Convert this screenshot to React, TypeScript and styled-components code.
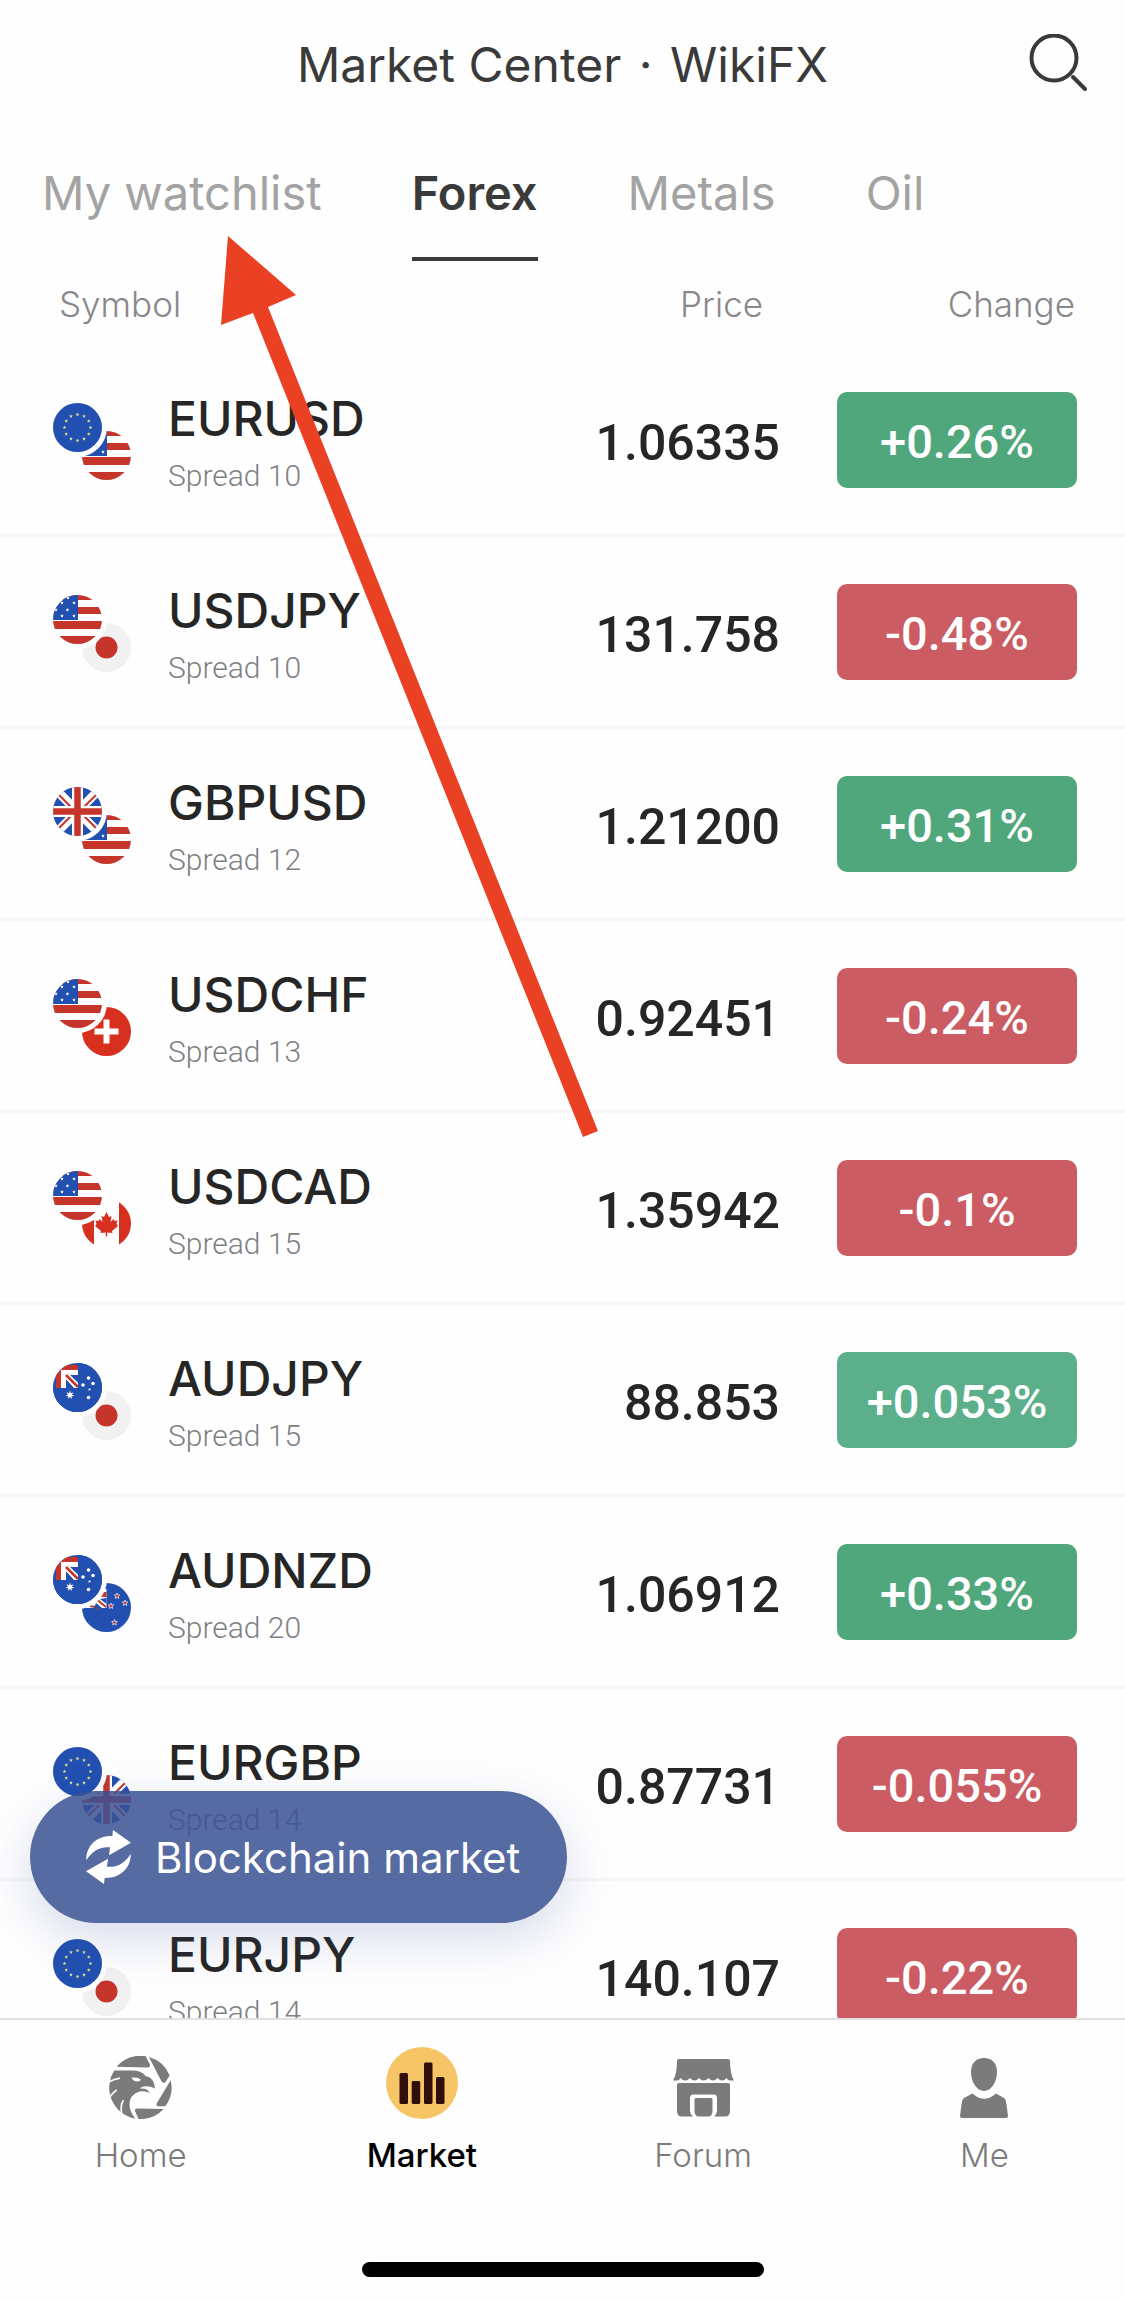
import React, { useId, useState } from 'react';
import styled, { createGlobalStyle } from 'styled-components';

type Country = 'eu' | 'us' | 'jp' | 'gb' | 'ch' | 'ca' | 'au' | 'nz';

interface Quote {
  symbol: string;
  base: Country;
  quote: Country;
  spread: number;
  price: string;
  change: string;
  soft?: boolean;
}

const quotes: Quote[] = [
  { symbol: 'EURUSD', base: 'eu', quote: 'us', spread: 10, price: '1.06335', change: '+0.26%' },
  { symbol: 'USDJPY', base: 'us', quote: 'jp', spread: 10, price: '131.758', change: '-0.48%' },
  { symbol: 'GBPUSD', base: 'gb', quote: 'us', spread: 12, price: '1.21200', change: '+0.31%' },
  { symbol: 'USDCHF', base: 'us', quote: 'ch', spread: 13, price: '0.92451', change: '-0.24%' },
  { symbol: 'USDCAD', base: 'us', quote: 'ca', spread: 15, price: '1.35942', change: '-0.1%' },
  { symbol: 'AUDJPY', base: 'au', quote: 'jp', spread: 15, price: '88.853', change: '+0.053%', soft: true },
  { symbol: 'AUDNZD', base: 'au', quote: 'nz', spread: 20, price: '1.06912', change: '+0.33%' },
  { symbol: 'EURGBP', base: 'eu', quote: 'gb', spread: 14, price: '0.87731', change: '-0.055%' },
  { symbol: 'EURJPY', base: 'eu', quote: 'jp', spread: 14, price: '140.107', change: '-0.22%' },
];

const tabs = ['My watchlist', 'Forex', 'Metals', 'Oil'];

const BLUE = '#2250b0';
const RED = '#c6352c';

const star = (cx: number, cy: number, r: number, points = 5) =>
  Array.from({ length: points * 2 }, (_, i) => {
    const a = (Math.PI * i) / points - Math.PI / 2;
    const d = i % 2 ? r * 0.45 : r;
    return `${(cx + d * Math.cos(a)).toFixed(2)},${(cy + d * Math.sin(a)).toFixed(2)}`;
  }).join(' ');

const UnionJack: React.FC = () => (
  <>
    <rect width="49" height="49" fill={BLUE} />
    <path d="M0 0L49 49M49 0L0 49" stroke="#fff" strokeWidth="9" />
    <path d="M5 7L20 22M44 7L29 22M5 42L20 27M44 42L29 27" stroke={RED} strokeWidth="2" />
    <path d="M24.5 0V49M0 24.5H49" stroke="#fff" strokeWidth="11" />
    <path d="M24.5 0V49M0 24.5H49" stroke={RED} strokeWidth="6.5" />
  </>
);

const flags: Record<Country, React.ReactNode> = {
  eu: (
    <>
      <rect width="49" height="49" fill={BLUE} />
      {Array.from({ length: 12 }, (_, i) => {
        const a = (Math.PI * i) / 6;
        return (
          <polygon
            key={i}
            points={star(24.5 + 13 * Math.sin(a), 24.5 - 13 * Math.cos(a), 2)}
            fill="#d6dc8c"
          />
        );
      })}
    </>
  ),
  us: (
    <>
      <rect width="49" height="49" fill="#fff" />
      <path d="M0 0H49V5H0ZM0 12H49V19H0ZM0 26H49V34H0ZM0 41H49V49H0Z" fill={RED} />
      <rect width="25" height="25" fill={BLUE} />
      {[[9, 8], [21, 8], [3, 15], [14.5, 15], [9, 21], [21, 21], [15, 3]].map(([x, y]) => (
        <polygon key={`${x}-${y}`} points={star(x, y, 1.9)} fill="#fff" />
      ))}
    </>
  ),
  jp: (
    <>
      <rect width="49" height="49" fill="#f1f1f1" />
      <circle cx="24.5" cy="24.5" r="11" fill={RED} />
    </>
  ),
  gb: <UnionJack />,
  ch: (
    <>
      <rect width="49" height="49" fill="#d8301f" />
      <path d="M21.5 12.5h6v9h9v6h-9v9h-6v-9h-9v-6h9z" fill="#fff" />
    </>
  ),
  ca: (
    <>
      <rect width="49" height="49" fill="#fefefe" />
      <path d="M0 0H12V49H0ZM37 0H49V49H37Z" fill="#d8301f" />
      <path
        d="M24.5 13L27 18L29.5 17L28.5 23L31.5 20L32.5 22L35.5 21.5L34.5 25L36 27L30 32L30.5 34L25.2 33.5V37.5H23.8V33.5L18.5 34L19 32L13 27L14.5 25L13.5 21.5L16.5 22L17.5 20L20.5 23L19.5 17L22 18Z"
        fill="#d8301f"
      />
    </>
  ),
  au: (
    <>
      <rect width="49" height="49" fill={BLUE} />
      <path d="M3 2H25V25H3Z" fill={RED} />
      <path d="M9 25V8H25" stroke="#fff" strokeWidth="2" fill="none" />
      <path d="M10 9H25V25H10Z" fill="#fff" />
      <path d="M16 12H25V20ZM13 16V25H21Z" fill={BLUE} />
      <path d="M12 11L26 25" stroke="#fff" strokeWidth="6" />
      <path d="M13 12L25 24" stroke={RED} strokeWidth="2.5" />
      <path d="M25 0H49V49H0V25H25Z" fill={BLUE} />
      <polygon points={star(17, 32, 4.5, 7)} fill="#fff" />
      {[[35.5, 15], [30, 22], [40, 20.5], [36.5, 26.5], [35.5, 34.5]].map(([x, y]) => (
        <circle key={`${x}-${y}`} cx={x} cy={y} r={x === 36.5 ? 1.1 : 1.8} fill="#fff" />
      ))}
    </>
  ),
  nz: (
    <>
      <rect width="49" height="49" fill={BLUE} />
      <path d="M4 6H24.5V25H4Z" fill="#fff" />
      <path d="M17 9H24.5V14H17Z" fill={RED} />
      <path d="M13 15L24 24M8 23L18 25" stroke={RED} strokeWidth="2" />
      <path d="M18 16L24.5 15V21ZM14 20L20 25H12Z" fill={BLUE} />
      {[[35, 13], [43, 20], [29, 23], [32.5, 39.5]].map(([x, y]) => (
        <polygon
          key={`${x}-${y}`}
          points={star(x, y, 3)}
          fill={RED}
          stroke="#dfe4f5"
          strokeWidth="0.8"
        />
      ))}
    </>
  ),
};

const FlagPair: React.FC<{ base: Country; quote: Country }> = ({ base, quote }) => {
  const clip = useId();
  return (
    <FlagArt viewBox="0 0 78 78" aria-hidden="true">
      <clipPath id={clip}>
        <circle cx="24.5" cy="24.5" r="24.5" />
      </clipPath>
      <g transform="translate(29 28)">
        <g clipPath={`url(#${clip})`}>{flags[quote]}</g>
      </g>
      <circle cx="24.5" cy="24.5" r="29.5" fill="#fefefe" />
      <g clipPath={`url(#${clip})`}>{flags[base]}</g>
    </FlagArt>
  );
};

const SearchIcon: React.FC = () => (
  <svg width="60" height="60" viewBox="0 0 60 60" fill="none" stroke="#3a3a3a" strokeWidth="4">
    <circle cx="25" cy="24" r="22.5" />
    <path d="M44 43L56 55" strokeLinecap="round" />
  </svg>
);

const EagleIcon: React.FC = () => (
  <svg width="63" height="63" viewBox="27 20 188 188" fill="#7b7b7b">
    <path d="M50 52A94 94 0 0 1 136 20L149 45Q151 54 143 54Z" />
    <path d="M146 23A94 94 0 0 1 208 78L195 98Q189 103 184 96Z" />
    <path d="M211 92A94 94 0 0 1 195 170H174Q166 169 170 160Z" />
    <path d="M190 178A94 94 0 0 1 115 208L105 185Q103 177 110 177Z" />
    <path d="M43 63H92Q126 62 136 80Q162 84 164 118Q156 110 138 110Q122 111 119 117Q141 115 149 130Q130 122 112 128Q88 138 88 164Q88 184 105 207A94 94 0 0 1 43 63Z" />
    <path d="M94 84L112 85L122 90Q121 97 110 96Q99 95 94 84Z" fill="#fff" />
    <path
      d="M26 98Q40 89 60 86M26 146Q36 132 50 121M65 192Q60 166 70 152"
      stroke="#fff"
      strokeWidth="5"
      fill="none"
    />
  </svg>
);

const MarketIcon: React.FC = () => (
  <svg width="72" height="72" viewBox="0 0 72 72">
    <circle cx="36" cy="36" r="36" fill="#f5c566" />
    <g fill="#2f0e0b">
      <rect x="13.5" y="26" width="8.5" height="31" rx="1.5" />
      <rect x="25.7" y="34" width="8.5" height="23" rx="1.5" />
      <rect x="38" y="15.5" width="8.5" height="41.5" rx="1.5" />
      <rect x="50" y="30" width="8.5" height="27" rx="1.5" />
    </g>
  </svg>
);

const ForumIcon: React.FC = () => (
  <svg width="61" height="60" viewBox="0 0 61 60" fill="#7b7b7b">
    <path d="M6 0H55Q57 0 57 2Q57 15 61 21.5H57Q55 21.5 53.5 19Q49.5 24 44.5 19Q40 24 35.5 19Q30.5 24 26 19Q21.5 24 17 19Q12 24 7.5 19Q6 21.5 4 21.5H0Q4 15 4 2Q4 0 6 0Z" />
    <path d="M6 24H55Q57 24 57 26V52Q57 57.5 52 57.5H41Q44 55 44 52V39Q44 35.5 41 35.5H20Q17 35.5 17 39V52Q17 55 20 57.5H9Q4 57.5 4 52V26Q4 24 6 24Z" />
    <path d="M23 39H38Q39.5 39 39.5 40.5V52Q39.5 57.5 35 57.5H26Q21.5 57.5 21.5 52V40.5Q21.5 39 23 39Z" />
  </svg>
);

const MeIcon: React.FC = () => (
  <svg width="48" height="61" viewBox="0 0 48 61" fill="#7b7b7b">
    <path d="M24 0C32 0 37 5 37 14C37 24 31 33 24 33C17 33 11 24 11 14C11 5 16 0 24 0Z" />
    <path d="M12.5 35.5Q24 46 36 35.5L44 40Q45.5 41 46 43.5L48 58Q48 60 46 60H2Q0 60 0 58L2 43.5Q2.5 41 4 40Z" />
  </svg>
);

const SwapIcon: React.FC = () => (
  <svg width="45" height="54" viewBox="49 60 135 162" fill="#fff" aria-hidden="true">
    <path d="M50 151C48 108 82 76 128 78L130 60L184 98L118 136L121 112C92 108 66 124 50 151Z" />
    <path
      d="M50 151C48 108 82 76 128 78L130 60L184 98L118 136L121 112C92 108 66 124 50 151Z"
      transform="rotate(180 116.5 141)"
    />
  </svg>
);

const navItems = [
  { label: 'Home', icon: <EagleIcon /> },
  { label: 'Market', icon: <MarketIcon /> },
  { label: 'Forum', icon: <ForumIcon /> },
  { label: 'Me', icon: <MeIcon /> },
];

const App: React.FC = () => {
  const [active, setActive] = useState('Forex');

  return (
    <Screen>
      <GlobalStyle />
      <Header>
        <Title>
          Market Center <Dot>·</Dot> WikiFX
        </Title>
        <SearchButton type="button" aria-label="Search">
          <SearchIcon />
        </SearchButton>
      </Header>
      <Tabs>
        {tabs.map((tab) => (
          <Tab key={tab} type="button" $active={tab === active} onClick={() => setActive(tab)}>
            {tab}
          </Tab>
        ))}
      </Tabs>
      <Content>
        <List>
          <QuoteTable>
            <thead>
              <tr>
                <HeadCell>Symbol</HeadCell>
                <HeadCell $column="price">Price</HeadCell>
                <HeadCell $column="change">Change</HeadCell>
              </tr>
            </thead>
            <tbody>
              {quotes.map((q) => (
                <tr key={q.symbol}>
                  <Cell>
                    <Pair>
                      <FlagPair base={q.base} quote={q.quote} />
                      <PairText>
                        <PairName>{q.symbol}</PairName>
                        <Spread>Spread {q.spread}</Spread>
                      </PairText>
                    </Pair>
                  </Cell>
                  <PriceCell>{q.price}</PriceCell>
                  <Cell>
                    <Badge $down={q.change.startsWith('-')} $soft={q.soft}>
                      {q.change}
                    </Badge>
                  </Cell>
                </tr>
              ))}
            </tbody>
          </QuoteTable>
        </List>
        <BlockchainButton type="button">
          <SwapIcon />
          Blockchain market
        </BlockchainButton>
      </Content>
      <BottomBar>
        <Nav>
          {navItems.map(({ label, icon }) => (
            <NavLink key={label} href={`#${label.toLowerCase()}`} $active={label === 'Market'}>
              <NavIcon>{icon}</NavIcon>
              {label}
            </NavLink>
          ))}
        </Nav>
        <HomeIndicator />
      </BottomBar>
      <Pointer viewBox="0 0 380 902" aria-hidden="true">
        <path d="M7 0L75 59L47 71L377 895L362 901L32 77L0 89Z" fill="#ea4125" />
      </Pointer>
    </Screen>
  );
};

export default App;

const GlobalStyle = createGlobalStyle`
  * {
    box-sizing: border-box;
  }
  body {
    margin: 0;
    background: #fefefe;
    font-family: Inter, 'Liberation Sans', sans-serif;
  }
  button {
    border: 0;
    padding: 0;
    background: none;
    font-family: inherit;
    cursor: pointer;
  }
  svg {
    display: block;
  }
`;

const Screen = styled.div`
  position: relative;
  display: flex;
  flex-direction: column;
  height: 100vh;
  overflow: hidden;
`;

const Header = styled.header`
  display: grid;
  grid-template-columns: 60px 1fr 60px;
  align-items: center;
  height: 128px;
  padding: 0 36px;
`;

const Title = styled.h1`
  grid-column: 2;
  margin: 0;
  text-align: center;
  font-size: 48px;
  font-weight: 400;
  color: #3a3a3a;
`;

const Dot = styled.span`
  margin: 0 4px;
`;

const SearchButton = styled.button`
  display: flex;
`;

const Tabs = styled.nav`
  display: flex;
  gap: 90px;
  height: 133px;
  padding: 0 42px;
`;

const Tab = styled.button<{ $active: boolean }>`
  border-bottom: 4px solid ${(props) => (props.$active ? '#3a3a3a' : 'transparent')};
  font-size: 47px;
  font-weight: ${(props) => (props.$active ? 600 : 400)};
  color: ${(props) => (props.$active ? '#3a3a3a' : '#a3a3a3')};
`;

const Content = styled.main`
  position: relative;
  flex: 1;
  min-height: 0;
`;

const List = styled.div`
  height: 100%;
  overflow: hidden;
`;

const QuoteTable = styled.table`
  width: 100%;
  border-collapse: separate;
  border-spacing: 0;
  table-layout: fixed;
`;

const headWidths = { price: '300px', change: '345px' };

const HeadCell = styled.th<{ $column?: 'price' | 'change' }>`
  width: ${(props) => (props.$column ? headWidths[props.$column] : 'auto')};
  height: 84px;
  padding: 2px ${(props) => (props.$column === 'change' ? 50 : 17)}px 0 59px;
  text-align: ${(props) => (props.$column ? 'right' : 'left')};
  font-size: 35px;
  font-weight: 300;
  color: #88888c;
`;

const Cell = styled.td`
  height: 192px;
  padding: 0;
  border-bottom: 3px solid #f7f7f8;
`;

const PriceCell = styled(Cell)`
  padding-top: 6px;
  text-align: right;
  font-family: Roboto, sans-serif;
  font-size: 50px;
  font-weight: 500;
  color: #262626;
`;

const Pair = styled.div`
  display: flex;
  align-items: center;
  gap: 37px;
  padding: 4px 0 0 53px;
`;

const FlagArt = styled.svg`
  flex-shrink: 0;
  width: 78px;
  height: 78px;
`;

const PairText = styled.div`
  padding-top: 4px;
`;

const PairName = styled.div`
  font-size: 48px;
  font-weight: 500;
  line-height: 64px;
  color: #262626;
`;

const Spread = styled.div`
  font-family: Roboto, sans-serif;
  font-size: 30px;
  font-weight: 300;
  line-height: 50px;
  color: #808084;
`;

const Badge = styled.div<{ $down: boolean; $soft?: boolean }>`
  display: flex;
  align-items: center;
  justify-content: center;
  width: 240px;
  height: 96px;
  margin: 0 48px 0 auto;
  padding-top: 4px;
  border-radius: 10px;
  background: ${(props) => (props.$down ? '#cb5c63' : props.$soft ? '#5bb08b' : '#4fa77b')};
  font-family: Roboto, sans-serif;
  font-size: 47px;
  font-weight: 500;
  color: #fff;
`;

const BlockchainButton = styled.button`
  position: absolute;
  left: 30px;
  bottom: 95px;
  display: flex;
  align-items: center;
  gap: 24px;
  height: 132px;
  padding: 0 47px 0 56px;
  border-radius: 66px;
  background: rgba(58, 81, 147, 0.85);
  box-shadow: 0 16px 50px rgba(60, 85, 160, 0.2);
  font-size: 42px;
  color: #fff;
`;

const BottomBar = styled.footer`
  display: flex;
  flex-direction: column;
  justify-content: space-between;
  align-items: center;
  height: 282px;
  padding-bottom: 23px;
  border-top: 2px solid #e2e2e2;
`;

const Nav = styled.nav`
  display: grid;
  grid-template-columns: repeat(4, 1fr);
  width: 100%;
`;

const NavLink = styled.a<{ $active: boolean }>`
  display: flex;
  flex-direction: column;
  align-items: center;
  gap: 16px;
  text-decoration: none;
  font-size: 33px;
  line-height: 40px;
  font-weight: ${(props) => (props.$active ? 500 : 300)};
  color: ${(props) => (props.$active ? '#000' : '#7b7b7b')};
`;

const NavIcon = styled.span`
  display: flex;
  align-items: flex-end;
  height: 99px;
`;

const HomeIndicator = styled.div`
  width: 402px;
  height: 15px;
  border-radius: 8px;
  background: #000;
`;

const Pointer = styled.svg`
  position: absolute;
  top: 236px;
  left: 221px;
  width: 380px;
  height: 902px;
  pointer-events: none;
`;
